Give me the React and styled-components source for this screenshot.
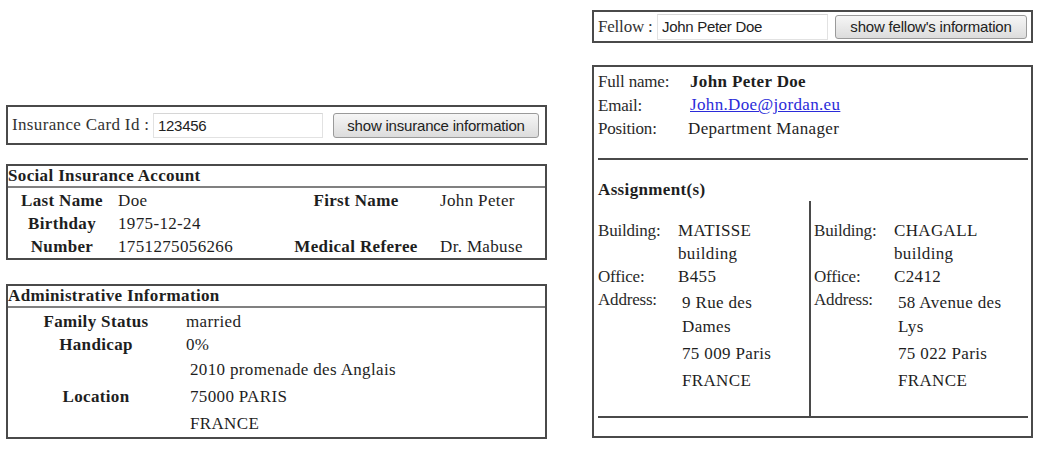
import styled, { createGlobalStyle } from "styled-components";

const GlobalStyle = createGlobalStyle`
  body {
    margin: 0;
    background: #fff;
    font-family: "Liberation Serif", "Times New Roman", serif;
    font-size: 17px;
    letter-spacing: 0.35px;
    color: #1e1e1e;
  }
`;

export default function App() {
  return (
    <Page>
      <GlobalStyle />
      <LeftColumn>
        <SearchBar $height={40} $pad={4}>
          <Label $width={141}>Insurance Card Id :</Label>
          <Field defaultValue="123456" $width={170} $height={25} />
          <Button $width={206} $height={25} $gap={10}>show insurance information</Button>
        </SearchBar>

        <Panel $top={19}>
          <PanelTitle>Social Insurance Account</PanelTitle>
          <AccountGrid>
            <Term>Last Name</Term>
            <Value>Doe</Value>
            <Term>First Name</Term>
            <Value $indent={10}>John Peter</Value>

            <Term>Birthday</Term>
            <Value>1975-12-24</Value>
            <Term />
            <Value />

            <Term>Number</Term>
            <Value>1751275056266</Value>
            <Term>Medical Referee</Term>
            <Value $indent={10}>Dr. Mabuse</Value>
          </AccountGrid>
        </Panel>

        <Panel $top={24}>
          <PanelTitle>Administrative Information</PanelTitle>
          <AdminGrid>
            <Term>Family Status</Term>
            <Value>married</Value>
            <Term>Handicap</Term>
            <Value>0%</Value>
            <Term>Location</Term>
            <AddressBlock>
              <AddressLine>2010 promenade des Anglais</AddressLine>
              <AddressLine>75000 PARIS</AddressLine>
              <AddressLine>FRANCE</AddressLine>
            </AddressBlock>
          </AdminGrid>
        </Panel>
      </LeftColumn>

      <RightColumn>
        <SearchBar $height={33} $pad={4}>
          <Label $width={59} $spacing={-0.2}>Fellow :</Label>
          <Field defaultValue="John Peter Doe" $width={171} $height={26} />
          <Button $width={192} $height={24} $gap={7}>show fellow's information</Button>
        </SearchBar>

        <FellowCard>
          <IdentityGrid>
            <Key>Full name:</Key>
            <Strong>John Peter Doe</Strong>
            <Key>Email:</Key>
            <Mail href="#">John.Doe@jordan.eu</Mail>
            <Key>Position:</Key>
            <Plain $shift={-2}>Department Manager</Plain>
          </IdentityGrid>

          <Rule $top={17} />
          <SectionTitle>Assignment(s)</SectionTitle>

          <Assignments>
            <Assignment building={["MATISSE", "building"]} office="B455" address={[["9 Rue des", "Dames"], ["75 009 Paris"], ["FRANCE"]]} />
            <Assignment divided building={["CHAGALL", "building"]} office="C2412" address={[["58 Avenue des", "Lys"], ["75 022 Paris"], ["FRANCE"]]} />
          </Assignments>
          <Rule $top={0} />
        </FellowCard>
      </RightColumn>
    </Page>
  );
}

function Assignment({ building, office, address, divided }) {
  return (
    <AssignmentCol $divided={divided}>
      <AssignGrid>
        <Key>Building:</Key>
        <Plain>{building.map((b) => <div key={b}>{b}</div>)}</Plain>
        <Key>Office:</Key>
        <Plain>{office}</Plain>
        <Key>Address:</Key>
        <AddressCells>
          {address.map((cell, i) => (
            <AddressCell key={i}>
              {cell.map((l) => <div key={l}>{l}</div>)}
            </AddressCell>
          ))}
        </AddressCells>
      </AssignGrid>
    </AssignmentCol>
  );
}

const Page = styled.div`
  display: flex;
  align-items: flex-start;
  gap: 45px;
  padding-left: 6px;
`;

const LeftColumn = styled.div`
  width: 541px;
  padding-top: 105px;
  display: flex;
  flex-direction: column;
`;

const RightColumn = styled.div`
  width: 441px;
  padding-top: 10px;
  display: flex;
  flex-direction: column;
`;

const SearchBar = styled.div`
  box-sizing: border-box;
  height: ${(p) => p.$height}px;
  border: 2px solid #4a4a4a;
  display: flex;
  align-items: center;
  padding-left: ${(p) => p.$pad}px;
`;

const Label = styled.span`
  width: ${(p) => p.$width}px;
  flex: none;
  white-space: nowrap;
  color: #333;
  letter-spacing: ${(p) => (p.$spacing ?? 0.35)}px;
`;

const Field = styled.input`
  box-sizing: border-box;
  width: ${(p) => p.$width}px;
  height: ${(p) => p.$height}px;
  border: 1px solid #e2e2e2;
  border-top-color: #d6d6d6;
  padding: 0 4px;
  font-family: "Liberation Sans", Arial, sans-serif;
  font-size: 15px;
  letter-spacing: -0.3px;
  color: #222;
  background: #fff;
  outline: none;
`;

const Button = styled.button`
  box-sizing: border-box;
  width: ${(p) => p.$width}px;
  height: ${(p) => p.$height}px;
  margin-left: ${(p) => p.$gap}px;
  border: 1px solid #9a9a9a;
  border-radius: 3px;
  background: linear-gradient(#f6f6f6, #dcdcdc);
  font-family: "Liberation Sans", Arial, sans-serif;
  font-size: 15px;
  letter-spacing: -0.2px;
  color: #222;
  padding: 0;
`;

const Panel = styled.section`
  box-sizing: border-box;
  margin-top: ${(p) => p.$top}px;
  border: 2px solid #4a4a4a;
`;

const PanelTitle = styled.div`
  font-weight: bold;
  line-height: 20px;
  border-bottom: 2px solid #808080;
`;

const AccountGrid = styled.div`
  display: grid;
  grid-template-columns: 108px 166px 148px 1fr;
  grid-auto-rows: 23px;
  align-items: center;
  padding-top: 1px;
`;

const AdminGrid = styled.div`
  display: grid;
  grid-template-columns: 176px 1fr;
  grid-template-rows: 23px 23px auto;
  align-items: center;
  padding-top: 2px;
`;

const Term = styled.div`
  font-weight: bold;
  text-align: center;
  line-height: 23px;
  white-space: nowrap;
`;

const Value = styled.div`
  line-height: 23px;
  padding-left: ${(p) => (p.$indent ?? 2)}px;
  white-space: nowrap;
`;

const AddressBlock = styled.div`
  display: flex;
  flex-direction: column;
  padding-left: 6px;
`;

const AddressLine = styled.div`
  line-height: 27px;
`;

const FellowCard = styled.section`
  box-sizing: border-box;
  margin-top: 22px;
  height: 373px;
  border: 2px solid #4a4a4a;
  padding: 3px 3px 0 4px;
`;

const IdentityGrid = styled.div`
  display: grid;
  grid-template-columns: 92px 1fr;
  grid-auto-rows: 23.5px;
  align-items: center;
`;

const Key = styled.div`
  line-height: 23px;
  color: #2a2a2a;
  letter-spacing: -0.2px;
`;

const Strong = styled.div`
  font-weight: bold;
`;

const Mail = styled.a`
  color: #2b2bd9;
  text-decoration: underline;
  justify-self: start;
`;

const Plain = styled.div`
  line-height: 23px;
  margin-left: ${(p) => p.$shift || 0}px;
`;

const Rule = styled.div`
  margin-top: ${(p) => p.$top}px;
  border-top: 2px solid #4a4a4a;
`;

const SectionTitle = styled.div`
  font-weight: bold;
  line-height: 23px;
  margin-top: 18px;
`;

const Assignments = styled.div`
  display: grid;
  grid-template-columns: 211px 1fr;
  height: 215px;
`;

const AssignmentCol = styled.div`
  padding-top: 18px;
  padding-left: ${(p) => (p.$divided ? 3 : 0)}px;
  border-left: ${(p) => (p.$divided ? "2px solid #4a4a4a" : "none")};
`;

const AssignGrid = styled.div`
  display: grid;
  grid-template-columns: 80px 1fr;
  align-items: start;
`;

const AddressCells = styled.div`
  display: flex;
  flex-direction: column;
  gap: 3px;
  padding-top: 3px;
  padding-left: 4px;
`;

const AddressCell = styled.div`
  line-height: 24px;
`;
